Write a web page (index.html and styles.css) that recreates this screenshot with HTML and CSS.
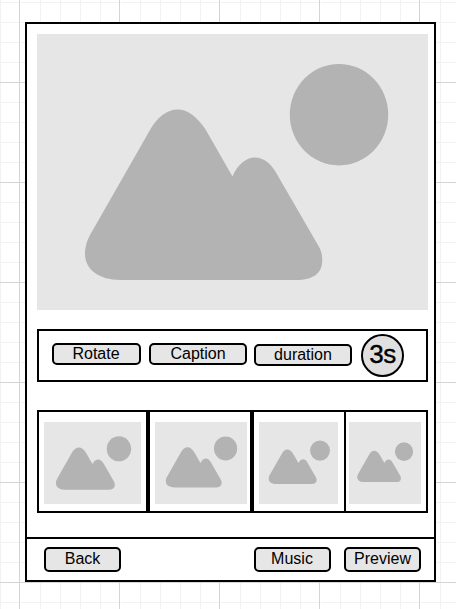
FILE: index.html
```html
<!DOCTYPE html>
<html lang="en">
<head>
<meta charset="utf-8">
<title>Slideshow editor</title>
<link rel="stylesheet" href="styles.css">
</head>
<body>
<svg class="symbols" aria-hidden="true">
  <symbol id="picture" viewBox="0 0 391 276">
    <ellipse cx="302" cy="80.7" rx="49.2" ry="50.7"/>
    <path d="M55 197.5L113 96C120 83.500 130 75.5 140.5 75.5S160 83 168 94.500L195.500 142.500C200 131 209 123.500 218 123.500S234 130 239 138.500L281.500 212C284 216 285.300 221 285.300 226C285.300 239 277 246 259 246H84C60 246 48 234 48 220C48 212 50.500 205 55 197.500Z"/>
  </symbol>
</svg>
<main class="screen">
  <section class="editor">
    <svg class="picture"><use href="#picture"/></svg>
    <div class="toolbar">
      <button class="button rotate">Rotate</button>
      <button class="button caption">Caption</button>
      <button class="button duration">duration</button>
      <span class="seconds">3s</span>
    </div>
    <div class="filmstrip">
      <div class="frame"><svg class="thumb"><use href="#picture"/></svg></div>
      <div class="frame"><svg class="thumb"><use href="#picture" x="-0.5" y="-1"/></svg></div>
      <div class="frame"><svg class="thumb"><use href="#picture" y="-0.8"/></svg></div>
      <div class="frame"><svg class="thumb"><use href="#picture" x="-0.6" y="-0.8"/></svg></div>
    </div>
  </section>
  <footer class="footer">
    <button class="button">Back</button>
    <button class="button music">Music</button>
    <button class="button">Preview</button>
  </footer>
</main>
</body>
</html>
```
FILE: styles.css
```css
* {
  box-sizing: border-box;
}

body {
  margin: 0;
  height: 609px;
  overflow: hidden;
  padding: 22px 20px 27px 25px;
  font-family: "Liberation Sans", Arial, sans-serif;
  color: #000;
  background-color: #fff;
  background-image:
    linear-gradient(to right, #d4d4d4 1px, transparent 1px),
    linear-gradient(to bottom, #d4d4d4 1px, transparent 1px),
    linear-gradient(to right, #fff 1px, transparent 1px),
    linear-gradient(to right, #f2f2f2 1px, transparent 1px),
    linear-gradient(to bottom, #f2f2f2 1px, transparent 1px);
  background-size: 100px 100px, 100px 100px, 100px 100px, 20px 20px, 20px 20px;
  background-position: 19px 0, 0 82px, 20px 0, 0 0, 0 2px;
}

.symbols {
  position: absolute;
  width: 0;
  height: 0;
}

.screen {
  width: 411px;
  height: 560px;
  border: 2px solid #000;
  background: #fff;
  display: flex;
  flex-direction: column;
}

.editor {
  flex: 1;
  padding: 10px 6px 0 10px;
}

.picture,
.thumb {
  display: block;
  background: #e6e6e6;
  fill: #b3b3b3;
}

.picture {
  width: 391px;
  height: 276px;
}

.toolbar {
  width: 391px;
  height: 53px;
  margin-top: 19px;
  padding: 3px 0 0 13px;
  border: 2px solid #000;
  display: flex;
  align-items: flex-start;
}

.button {
  width: 77px;
  height: 25px;
  padding: 0 0 2px;
  border: 2px solid #000;
  border-radius: 5px;
  background: #e6e6e6;
  color: #000;
  font: 16px/16px "Liberation Sans", Arial, sans-serif;
  text-align: center;
}

.toolbar .button {
  height: 22px;
  margin-top: 9px;
  padding-bottom: 0;
  line-height: 18px;
}

.toolbar .rotate {
  width: 89px;
  margin-right: 8px;
  padding-right: 1px;
}

.toolbar .caption {
  width: 98px;
  margin-right: 7px;
}

.toolbar .duration {
  width: 98px;
  margin-top: 10px;
  margin-right: 9px;
}

.seconds {
  width: 43px;
  height: 43px;
  border: 2px solid #000;
  border-radius: 50%;
  background: #e0e0e0;
  font-size: 26px;
  line-height: 37px;
  text-align: center;
  letter-spacing: -0.5px;
  -webkit-text-stroke: 0.4px #000;
}

.filmstrip {
  width: 391px;
  height: 103px;
  margin-top: 28px;
  border: 2px solid #000;
  display: grid;
  grid-template-columns: 111px 104px 92px 80px;
}

.frame {
  padding: 10px 5px 0;
  border-right: 4px solid #000;
}

.frame:nth-child(2) {
  padding-right: 3px;
}

.frame:nth-child(3) {
  padding-right: 6px;
  border-right-width: 2px;
}

.frame:nth-child(4) {
  padding-left: 3px;
  border-right: 0;
}

.thumb {
  width: 100%;
  height: 82px;
}

.footer {
  height: 43px;
  border-top: 2px solid #000;
  padding: 8px 13px 0 17px;
  display: flex;
}

.footer .music {
  margin-left: auto;
  margin-right: 13px;
  padding-right: 1px;
}
```
